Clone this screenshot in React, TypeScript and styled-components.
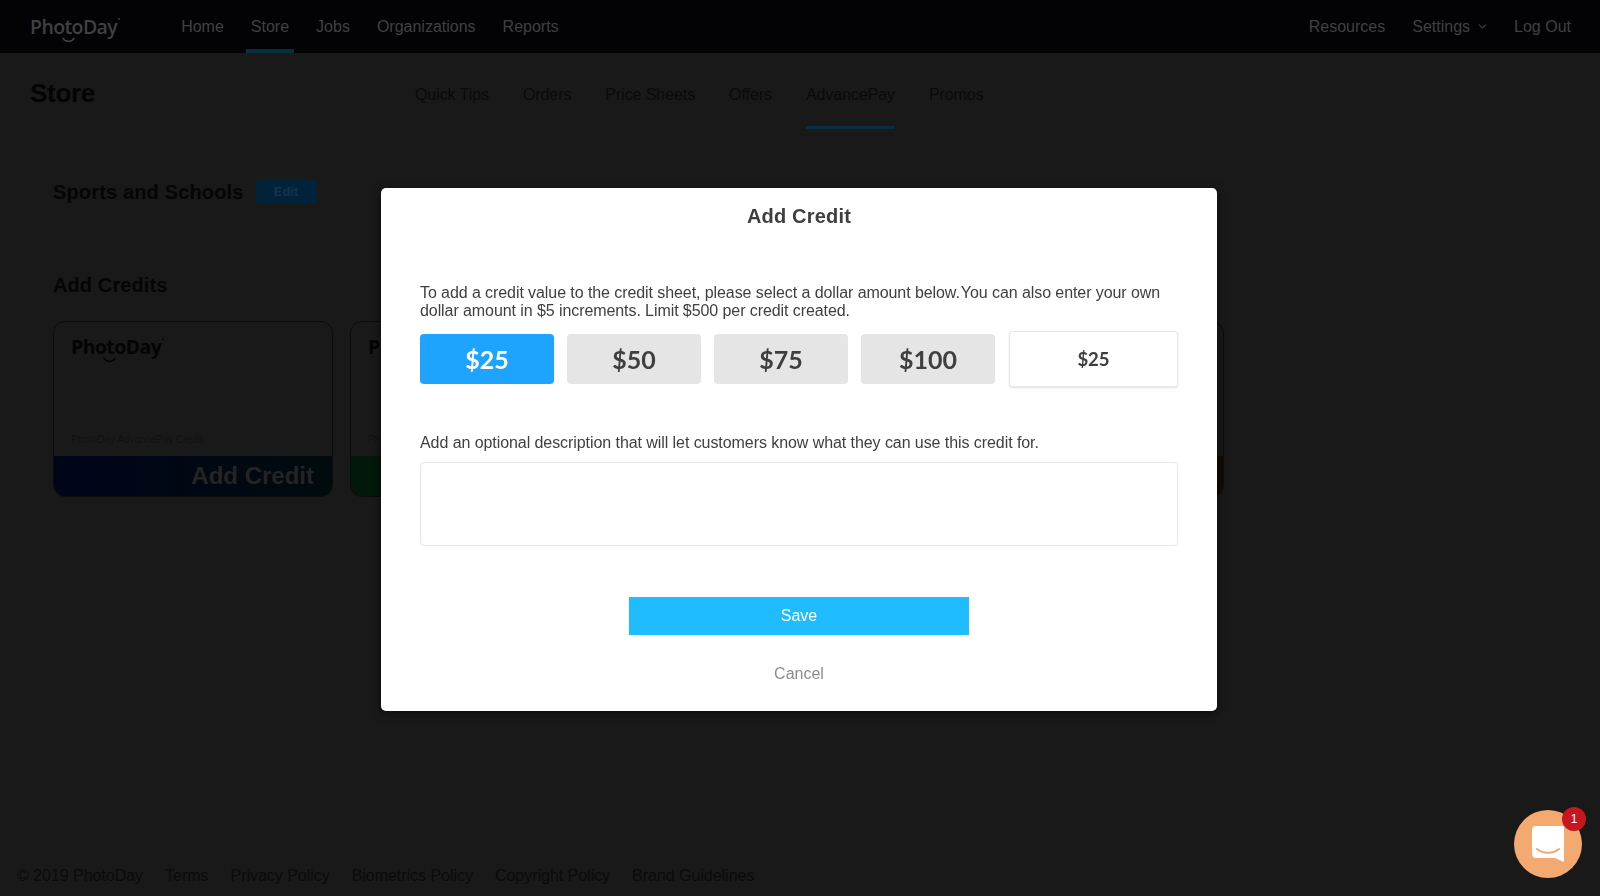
import { useState } from "react";
import styled, { createGlobalStyle } from "styled-components";
import { ChevronDown } from "lucide-react";

const GlobalStyle = createGlobalStyle`
  * { box-sizing: border-box; }
  html, body { margin: 0; padding: 0; height: 100%; overflow: hidden; }
  body {
    background: #191919;
    font-family: "Liberation Sans", Arial, sans-serif;
  }
`;

const cards = [
  { from: "#00051a", to: "#010b0d", name: "blue" },
  { from: "#02180a", to: "#02140a", name: "green" },
  { from: "#151002", to: "#140e02", name: "yellow" },
  { from: "#120c02", to: "#100b02", name: "orange" },
];

const amounts = ["$25", "$50", "$75", "$100"];

function Logo({ color, weight }: { color: string; weight: number }) {
  return (
    <LogoWrap $color={color} $weight={weight}>
      PhotoDay
      <LogoMark viewBox="0 0 24 12" fill="none">
        <path d="M2 2.5C6 10 18 10 22 2.5" stroke={color} strokeWidth="3" strokeLinecap="round" />
      </LogoMark>
      <LogoDot $color={color} />
    </LogoWrap>
  );
}

export default function App() {
  const [selected, setSelected] = useState("$25");

  return (
    <>
      <GlobalStyle />
      <Page>
        <TopBar>
          <TopLeft>
            <Logo color="#404040" weight={600} />
            <TopNav>
              <TopLink>Home</TopLink>
              <TopLink $active>Store</TopLink>
              <TopLink>Jobs</TopLink>
              <TopLink>Organizations</TopLink>
              <TopLink>Reports</TopLink>
            </TopNav>
          </TopLeft>
          <TopRight>
            <TopLink>Resources</TopLink>
            <TopLink>
              Settings <Chevron size={13} strokeWidth={2} />
            </TopLink>
            <TopLink>Log Out</TopLink>
          </TopRight>
        </TopBar>

        <SubBar>
          <SubTitle>Store</SubTitle>
          <Tabs>
            <Tab>Quick Tips</Tab>
            <Tab>Orders</Tab>
            <Tab>Price Sheets</Tab>
            <Tab>Offers</Tab>
            <Tab $active>AdvancePay</Tab>
            <Tab>Promos</Tab>
          </Tabs>
        </SubBar>

        <Content>
          <SheetHead>
            <SheetName>Sports and Schools</SheetName>
            <EditButton>Edit</EditButton>
          </SheetHead>
          <SectionTitle>Add Credits</SectionTitle>
          <CardRow>
            {cards.map((c) => (
              <Card key={c.name}>
                <CardBody>
                  <Logo color="#040404" weight={700} />
                  <CardCaption>PhotoDay AdvancePay Credit</CardCaption>
                </CardBody>
                <CardBand style={{ background: `linear-gradient(90deg, ${c.from}, ${c.to})` }}>
                  Add Credit
                </CardBand>
              </Card>
            ))}
          </CardRow>
        </Content>

        <Footer>
          <span>© 2019 PhotoDay</span>
          <span>Terms</span>
          <span>Privacy Policy</span>
          <span>Biometrics Policy</span>
          <span>Copyright Policy</span>
          <span>Brand Guidelines</span>
        </Footer>
      </Page>

      <Overlay>
        <Modal>
          <ModalTitle>Add Credit</ModalTitle>
          <Intro>
            To add a credit value to the credit sheet, please select a dollar amount <TightGap>below. You</TightGap> can
            also enter your own dollar amount in $5 increments. Limit $500 per credit created.
          </Intro>
          <AmountRow>
            {amounts.map((a) => (
              <AmountButton key={a} $active={selected === a} onClick={() => setSelected(a)}>
                {a}
              </AmountButton>
            ))}
            <AmountInput defaultValue="$25" />
          </AmountRow>
          <DescLabel>Add an optional description that will let customers know what they can use this credit for.</DescLabel>
          <DescBox />
          <SaveButton>Save</SaveButton>
          <CancelLink>Cancel</CancelLink>
        </Modal>
      </Overlay>

      <ChatBubble>
        <svg width="34" height="38" viewBox="0 0 34 38" fill="none">
          <path
            d="M5 1h27a1 1 0 0 1 1 1v35l-9-4H5a4 4 0 0 1-4-4V5a4 4 0 0 1 4-4z"
            fill="#fff"
          />
          <path d="M6 24c6 5 16 5 22 0" stroke="#f4a970" strokeWidth="2" strokeLinecap="round" />
        </svg>
        <ChatBadge>1</ChatBadge>
      </ChatBubble>
    </>
  );
}

const Page = styled.div`
  height: 896px;
  display: flex;
  flex-direction: column;
  background: #191919;
`;

const TopBar = styled.header`
  height: 53px;
  background: #030306;
  display: flex;
  align-items: stretch;
  justify-content: space-between;
  padding: 0 29px 0 30px;
`;

const TopLeft = styled.div`
  display: flex;
  align-items: center;
`;

const TopRight = styled.nav`
  display: flex;
  align-items: stretch;
  gap: 27px;
`;

const TopNav = styled.nav`
  display: flex;
  align-self: stretch;
  gap: 27px;
  margin-left: 64px;
`;

const TopLink = styled.a<{ $active?: boolean }>`
  position: relative;
  display: flex;
  align-items: center;
  gap: 6px;
  font-size: 16px;
  color: #404040;
  ${(p) =>
    p.$active &&
    `
    &::after {
      content: '';
      position: absolute;
      left: -5px;
      right: -5px;
      bottom: 0;
      height: 4px;
      background: #043040;
    }
  `}
`;

const Chevron = styled(ChevronDown)`
  margin-right: -2px;
`;

const LogoWrap = styled.span<{ $color: string; $weight: number }>`
  position: relative;
  display: inline-block;
  font-family: "Open Sans", sans-serif;
  font-weight: ${(p) => p.$weight};
  font-size: 19.5px;
  line-height: 1;
  color: ${(p) => p.$color};
  letter-spacing: -0.6px;
`;

const LogoMark = styled.svg`
  position: absolute;
  left: 32px;
  top: 20px;
  width: 13px;
  height: 6.5px;
`;

const LogoDot = styled.i<{ $color: string }>`
  position: absolute;
  right: -3px;
  top: 1px;
  width: 2px;
  height: 2px;
  border-radius: 50%;
  background: ${(p) => p.$color};
`;

const SubBar = styled.div`
  height: 82px;
  display: flex;
  align-items: flex-start;
  padding-left: 30px;
  border-bottom: 1px solid #171717;
`;

const SubTitle = styled.h1`
  margin: 0;
  width: 385px;
  font-size: 26px;
  line-height: 80px;
  font-weight: 700;
  color: #040404;
  letter-spacing: -0.3px;
`;

const Tabs = styled.nav`
  display: flex;
  gap: 34px;
  height: 76px;
`;

const Tab = styled.a<{ $active?: boolean }>`
  display: flex;
  align-items: center;
  padding-top: 10px;
  font-size: 16px;
  letter-spacing: -0.08px;
  color: #0a0a0a;
  border-bottom: 3px solid ${(p) => (p.$active ? "#043040" : "transparent")};
`;

const Content = styled.main`
  padding: 45px 0 0 53px;
  flex: 1;
`;

const SheetHead = styled.div`
  display: flex;
  align-items: center;
  gap: 12px;
  height: 24px;
`;

const SheetName = styled.h2`
  margin: 0;
  font-size: 20px;
  font-weight: 700;
  letter-spacing: 0.15px;
  color: #050505;
`;

const EditButton = styled.span`
  width: 61px;
  height: 25px;
  margin-top: -2px;
  display: flex;
  align-items: center;
  justify-content: center;
  background: #01233a;
  color: #10364e;
  font-size: 13px;
  font-weight: 700;
`;

const SectionTitle = styled.h2`
  margin: 69px 0 0;
  font-size: 20px;
  line-height: 24px;
  font-weight: 700;
  letter-spacing: 0.1px;
  color: #050505;
`;

const CardRow = styled.div`
  display: flex;
  gap: 17px;
  margin-top: 24px;
`;

const Card = styled.article`
  width: 280px;
  height: 176px;
  border: 1px solid #0c0c0c;
  border-radius: 12px;
  overflow: hidden;
  display: flex;
  flex-direction: column;
`;

const CardBody = styled.div`
  flex: 1;
  padding: 15px 17px 11px;
  display: flex;
  flex-direction: column;
  justify-content: space-between;
  align-items: flex-start;
`;

const CardCaption = styled.span`
  font-size: 10px;
  color: #111;
`;

const CardBand = styled.div`
  height: 40px;
  display: flex;
  align-items: center;
  justify-content: flex-end;
  padding: 0 18px 0 0;
  font-size: 24px;
  font-weight: 700;
  color: #242424;
`;

const Footer = styled.footer`
  display: flex;
  gap: 22px;
  padding: 0 0 11px 17px;
  font-size: 16px;
  letter-spacing: -0.03px;
  color: #0b0b0b;
`;

const Overlay = styled.div`
  position: fixed;
  inset: 0;
  display: flex;
  justify-content: center;
  padding: 188px 2px 0 0;
`;

const Modal = styled.section`
  width: 836px;
  height: 523px;
  background: #fff;
  border-radius: 5px;
  box-shadow: 0 2px 8px rgba(0, 0, 0, 0.6);
  padding: 16px 39px 0;
  display: flex;
  flex-direction: column;
  color: #3f3f3f;
`;

const ModalTitle = styled.h3`
  margin: 0;
  text-align: center;
  font-size: 20px;
  line-height: 24px;
  font-weight: 700;
  letter-spacing: 0.2px;
`;

const Intro = styled.p`
  margin: 56px 0 0;
  font-size: 16px;
  line-height: 18px;
  letter-spacing: -0.08px;
`;

const TightGap = styled.span`
  word-spacing: -3px;
`;

const AmountRow = styled.div`
  display: flex;
  align-items: center;
  gap: 13px;
  margin-top: 11px;
`;

const AmountButton = styled.button<{ $active: boolean }>`
  width: 134px;
  height: 50px;
  padding: 0;
  border: 0;
  border-radius: 4px;
  background: ${(p) => (p.$active ? "#1ea3ff" : "#e5e5e5")};
  color: ${(p) => (p.$active ? "#fff" : "#3f3f3f")};
  font-family: Lato, sans-serif;
  font-size: 25px;
  font-weight: 700;
`;

const AmountInput = styled.input`
  width: 169px;
  height: 56px;
  margin-left: 1px;
  border: 1px solid #e8e8e8;
  border-radius: 3px;
  box-shadow: 0 1px 2px rgba(0, 0, 0, 0.12);
  text-align: center;
  font-family: Lato, sans-serif;
  font-size: 18.5px;
  font-weight: 700;
  color: #3f3f3f;
  outline: none;
`;

const DescLabel = styled.label`
  margin-top: 47px;
  font-size: 16px;
  line-height: 18px;
  letter-spacing: -0.07px;
`;

const DescBox = styled.textarea`
  height: 84px;
  margin-top: 10px;
  border: 1px solid #e6e6e6;
  border-radius: 4px;
  resize: none;
  outline: none;
`;

const SaveButton = styled.button`
  align-self: center;
  width: 340px;
  height: 38px;
  margin-top: 51px;
  border: 0;
  background: #1fbcff;
  color: #fff;
  font-family: "Liberation Sans", Arial, sans-serif;
  font-size: 16px;
`;

const CancelLink = styled.a`
  align-self: center;
  margin-top: 30px;
  font-size: 16px;
  line-height: 18px;
  color: #8c8c8c;
`;

const ChatBubble = styled.div`
  position: fixed;
  left: 1514px;
  top: 810px;
  width: 68px;
  height: 68px;
  border-radius: 50%;
  background: #f4a970;
  display: flex;
  align-items: center;
  justify-content: center;
`;

const ChatBadge = styled.span`
  position: absolute;
  top: -3px;
  right: -4px;
  width: 24px;
  height: 24px;
  border-radius: 50%;
  background: #c8161e;
  color: #fff;
  font-size: 12px;
  display: flex;
  align-items: center;
  justify-content: center;
`;
